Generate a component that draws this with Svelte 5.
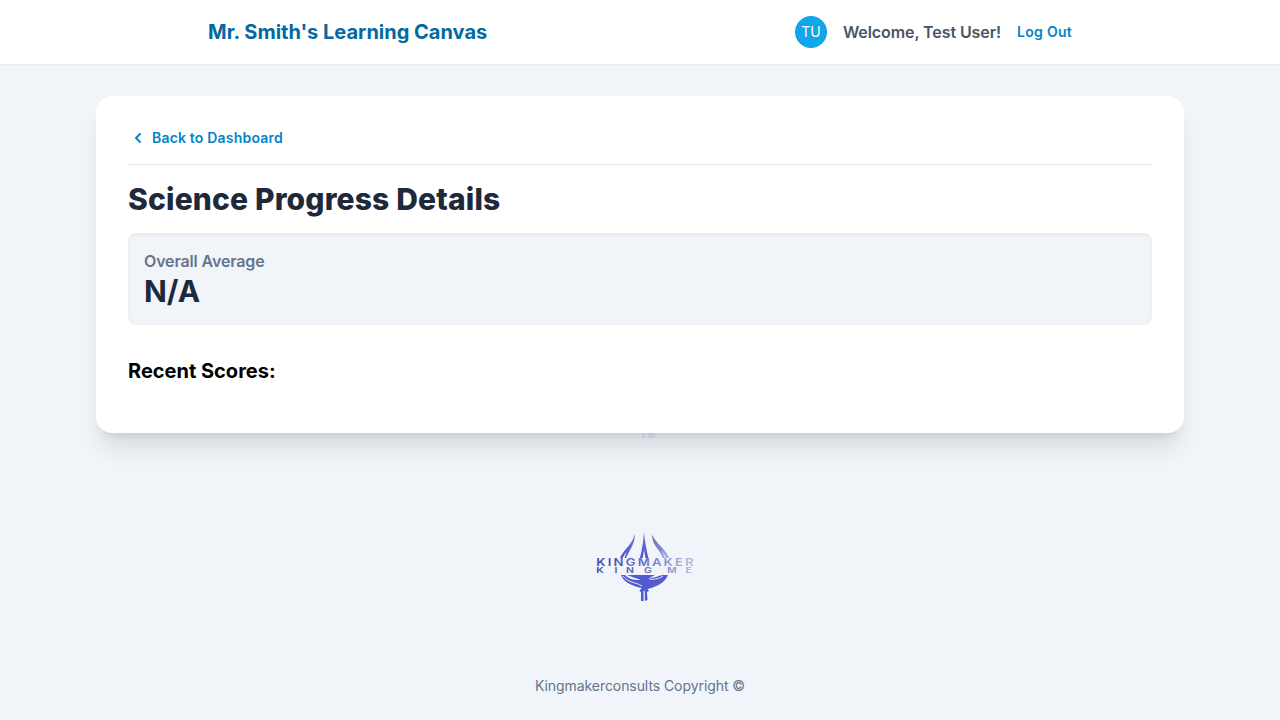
<script>
  const user = { name: 'Test User', initials: 'TU' };
  const subject = 'Science';
  const average = 'N/A';
</script>

<div class="page">
  <header>
    <div class="bar">
      <h1>Mr. Smith's Learning Canvas</h1>
      <div class="account">
        <span class="avatar">{user.initials}</span>
        <span class="welcome">Welcome, {user.name}!</span>
        <button class="link logout">Log Out</button>
      </div>
    </div>
  </header>

  <main>
    <div class="ghost" aria-hidden="true"><i></i><i></i></div>
    <section class="card">
      <div class="back">
        <button class="link">
          <svg width="20" height="20" viewBox="0 0 20 20" fill="currentColor" aria-hidden="true">
            <path fill-rule="evenodd" clip-rule="evenodd" d="M12.707 5.293a1 1 0 010 1.414L9.414 10l3.293 3.293a1 1 0 01-1.414 1.414l-4-4a1 1 0 010-1.414l4-4a1 1 0 011.414 0z" />
          </svg>
          Back to Dashboard
        </button>
      </div>
      <h2>{subject} Progress Details</h2>
      <div class="average">
        <p class="label">Overall Average</p>
        <p class="value">{average}</p>
      </div>
      <h3>Recent Scores:</h3>
    </section>
  </main>

  <footer>
    <svg class="logo" width="110" height="85" viewBox="0 0 110 85">
      <defs>
        <linearGradient id="blade" x1="0" y1="0" x2="0" y2="1">
          <stop offset="0" stop-color="#7c82a7" />
          <stop offset=".45" stop-color="#6268cc" />
          <stop offset="1" stop-color="#4850cf" />
        </linearGradient>
        <linearGradient id="right" x1="0" y1="0" x2="1" y2="1">
          <stop offset="0" stop-color="#777d9d" />
          <stop offset=".5" stop-color="#7d83cd" />
          <stop offset="1" stop-color="#afb4e6" />
        </linearGradient>
        <linearGradient id="word" gradientUnits="userSpaceOnUse" x1="5" y1="0" x2="80" y2="0">
          <stop offset="0" stop-color="#4048a8" />
          <stop offset=".5" stop-color="#686ec8" />
          <stop offset="1" stop-color="#b4b8df" />
        </linearGradient>
      </defs>
      <g>
        <path fill="url(#blade)" d="M44.5 9C46 17 40 24 36 33H34.5L37 26L32.5 33H30C34 24 43 19 44.5 9Z" />
        <path fill="url(#blade)" d="M54 7C55 17 56.5 25 58.3 33H55.5L54 25L52.7 33H50C52 25 53.2 17 54 7Z" />
        <path fill="url(#right)" d="M62.2 9.5C66 19 75 23 79.2 33H76.4L71.5 25L75 33H73C69 23 61.5 20 62.2 9.5Z" />
        <path fill="#525bcd" d="M31 50L35 50C40 55 45 55.3 51 55L45 53L37 50H65L59 53C67 53 69 50 73 50H78C75 58 66 62 57.5 64L59 66L57 67L57.5 75L54.8 76V66H53.5V76H51V67L49.5 66L51.5 63C43 61 34 58 31 50Z" />
        <path class="line" d="M33 51C38 58 46 57 52 61M59 54C65 55 71 53 73 51" />
      </g>
      <g class="words" fill="url(#word)">
        <text transform="scale(1.25 1)" x="5.1" y="41" font-size="10.5" font-weight="600" textLength="77.8" lengthAdjust="spacing">KINGMAKER</text>
        <text transform="scale(1.35 1)" y="48" font-size="7.8" font-weight="600" x="4.7 18.2 26.6 40 57 70.8">KINGME</text>
      </g>
    </svg>
    <p>Kingmakerconsults Copyright ©</p>
  </footer>
</div>

<style>
  :global(body) {
    background: #f1f5f9;
  }
  .page {
    min-height: 720px;
    display: flex;
    flex-direction: column;
    font-family: Inter, sans-serif;
    line-height: 1.5;
    color: #000;
  }
  h1, h2, h3, p {
    margin: 0;
  }
  header {
    background: #fff;
    box-shadow: 0 1px 2px rgb(0 0 0 / 0.05);
  }
  .bar {
    width: 864px;
    height: 64px;
    margin: 0 auto;
    display: flex;
    align-items: center;
    justify-content: space-between;
  }
  h1 {
    font-size: 20px;
    line-height: 28px;
    font-weight: 700;
    color: #0369a1;
  }
  .account {
    display: flex;
    align-items: center;
    gap: 16px;
  }
  .avatar {
    width: 32px;
    height: 32px;
    border-radius: 50%;
    display: grid;
    place-items: center;
    background: #0ea5e9;
    color: #fff;
    font-size: 14px;
    line-height: 20px;
  }
  .welcome {
    font-weight: 600;
    font-size: 16px;
    letter-spacing: -0.08px;
    color: #475569;
  }
  .link {
    display: flex;
    align-items: center;
    gap: 4px;
    padding: 0;
    border: 0;
    background: none;
    font: 600 14px/20px Inter, sans-serif;
    letter-spacing: 0.19px;
    color: #0284c7;
  }
  .logout {
    letter-spacing: 0.28px;
  }
  main {
    display: grid;
    justify-content: center;
    align-items: start;
    padding-top: 32px;
  }
  .card, .ghost {
    grid-area: 1 / 1;
  }
  .card {
    box-sizing: border-box;
    width: 1088px;
    height: 337px;
    padding: 32px;
    background: #fff;
    border-radius: 16px;
    box-shadow: 0 20px 25px -5px rgb(0 0 0 / 0.1), 0 8px 10px -6px rgb(0 0 0 / 0.1);
  }
  .ghost {
    align-self: end;
    justify-self: center;
    display: flex;
    gap: 3px;
    margin: 0 0 -5px 17px;
  }
  .ghost i {
    width: 3px;
    height: 5px;
    background: #e4e5fa;
  }
  .ghost i + i {
    width: 7px;
  }
  .back {
    padding-bottom: 16px;
    border-bottom: 1px solid #e5e7eb;
    margin-bottom: 16px;
  }
  h2 {
    font-size: 30px;
    line-height: 36px;
    font-weight: 800;
    letter-spacing: 0.16px;
    color: #1e293b;
    margin-bottom: 16px;
  }
  .average {
    padding: 16px;
    border-radius: 8px;
    background: #f1f5f9;
    box-shadow: inset 0 2px 4px rgb(0 0 0 / 0.05);
    margin-bottom: 32px;
  }
  .label {
    font-weight: 600;
    line-height: 24px;
    letter-spacing: -0.14px;
    color: #64748b;
  }
  .value {
    font-size: 30px;
    line-height: 36px;
    font-weight: 700;
    color: #1e293b;
  }
  h3 {
    font-size: 20px;
    line-height: 28px;
    font-weight: 700;
  }
  footer {
    margin-top: auto;
    display: flex;
    flex-direction: column;
    align-items: center;
    padding-bottom: 24px;
  }
  .logo {
    margin: 0 0 66px 10px;
  }
  .line {
    fill: none;
    stroke: #e3e9f3;
    stroke-width: 1;
  }
  .words {
    font-family: Inter, sans-serif;
  }
  footer p {
    font-size: 14px;
    line-height: 20px;
    letter-spacing: -0.07px;
    color: #64748b;
  }
</style>
